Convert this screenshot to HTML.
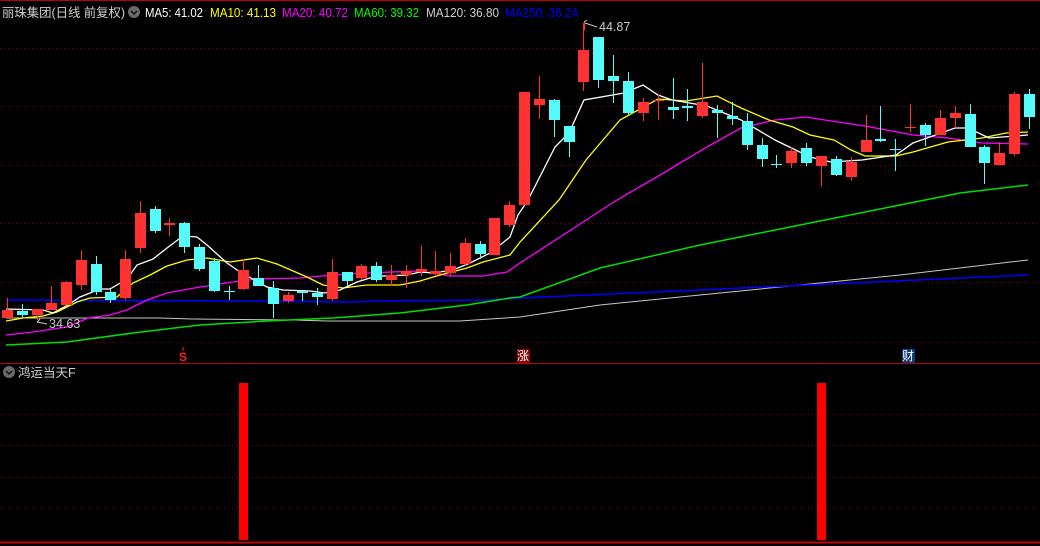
<!DOCTYPE html>
<html><head><meta charset="utf-8"><style>
html,body{margin:0;padding:0;background:#000;}
body{width:1040px;height:546px;overflow:hidden;position:relative;font-family:"Liberation Sans","Noto Sans CJK SC",sans-serif;}
svg{position:absolute;left:0;top:0;}
.t{font-size:12.5px;}
</style></head><body>
<svg width="1040" height="546" viewBox="0 0 1040 546" shape-rendering="crispEdges">
<g stroke="#8a0000" stroke-width="1" stroke-dasharray="1 3">
<line x1="0" y1="48.5" x2="1040" y2="48.5"/>
<line x1="0" y1="106.5" x2="1040" y2="106.5"/>
<line x1="0" y1="165.5" x2="1040" y2="165.5"/>
<line x1="0" y1="223.5" x2="1040" y2="223.5"/>
<line x1="0" y1="282.5" x2="1040" y2="282.5"/>
<line x1="0" y1="342.5" x2="1040" y2="342.5"/>
<line x1="0" y1="414.5" x2="1040" y2="414.5"/>
<line x1="0" y1="445.5" x2="1040" y2="445.5"/>
<line x1="0" y1="477.5" x2="1040" y2="477.5"/>
<line x1="0" y1="508.5" x2="1040" y2="508.5"/>
</g>
<line x1="0" y1="0.5" x2="1040" y2="0.5" stroke="#c00000"/>
<line x1="0" y1="363.5" x2="1040" y2="363.5" stroke="#c00000"/>
<line x1="0" y1="542.5" x2="1040" y2="542.5" stroke="#c00000" stroke-width="2"/>

<g fill="none" stroke-width="1" shape-rendering="auto">
<polyline stroke="#c8c8c8" points="6,318 160,318 193,319 293,320 327,321 460,321 520,317 600,305 700,295 800,285 900,275 1028,260"/>
<polyline stroke="#0000ff" stroke-width="1.5" points="6,300 250,301 353,302 383,301 490,300 520,298 700,290 850,283 1028,275"/>
<polyline stroke="#00e000" stroke-width="1.5" points="6,345 67,342 133,333 200,325 267,321 333,318 400,313 467,305 510,298 520,297 600,268 700,245 800,225 900,205 960,193 1028,185"/>
<polyline stroke="#ff00ff" stroke-width="1.3" points="6,335 33,332 67,327 88,318 110,315 127,310 147,300 167,293 200,287 233,282 257,279 300,278 333,275 367,273 417,271 433,273 450,276 483,276 507,272 520,263 617,200 655,178 707,147 741,128 775,120 806,117 844,123 865,126 913,135 948,138 982,143 1028,144"/>
<polyline stroke="#ffff00" stroke-width="1.3" points="6,321 23,318 43,316 57,312 77,302 90,298 117,297 133,283 150,275 167,266 187,260 207,258 230,262 257,258 277,264 307,277 323,285 343,288 367,285 400,285 420,281 440,275 467,268 483,262 510,255 520,242 559,200 586,160 620,120 658,99 686,101 717,96 741,108 769,120 793,127 810,135 834,140 851,150 865,156 896,156 913,152 948,142 982,138 1006,133 1028,132"/>
<polyline stroke="#ffffff" stroke-width="1.3" points="6,309 43,310 53,313 68,305 80,297 100,289 110,289 127,279 137,265 153,259 167,248 183,236 197,237 207,245 227,263 240,272 267,287 283,290 310,291 325,293 340,290 357,282 370,278 383,276 407,275 420,272 433,273 453,270 470,263 490,253 510,237 518,215 528,200 555,147 569,133 584,100 624,93 643,85 658,95 672,100 707,106 741,120 775,140 810,157 831,162 862,160 896,155 913,143 955,128 968,128 989,138 1028,135"/>
</g>

<g id="c"></g>

<g shape-rendering="auto">
<line x1="584.5" y1="22" x2="584.5" y2="30" stroke="#ff3232"/>
<path d="M585 23 L597 27" stroke="#c8c8c8" fill="none"/>
<path d="M584 22 L587 20" stroke="#c8c8c8" fill="none"/>
<text x="599" y="31" fill="#c8c8c8" class="t">44.87</text>
<path d="M37 322 L47 324 M37 322 L40 319" stroke="#c8c8c8" fill="none"/>
<text x="49" y="328" fill="#c8c8c8" class="t">34.63</text>
</g>

<rect x="239" y="383" width="9" height="157" fill="#ff0000"/>
<rect x="817" y="383" width="9" height="157" fill="#ff0000"/>

<text x="179" y="361" fill="#ff2020" font-size="12" font-weight="bold">S</text>
<line x1="183" y1="347" x2="183" y2="351" stroke="#ff2020"/>
<rect x="517" y="349" width="13" height="14" fill="#8a0000"/>
<text x="517" y="360" fill="#fff" font-size="12">涨</text>
<rect x="902" y="349" width="13" height="14" fill="#0a3c78"/>
<text x="902" y="360" fill="#fff" font-size="12">财</text>

<g shape-rendering="auto">
<circle cx="134" cy="12" r="6" fill="#6a6a6a"/>
<path d="M131 11 L134 14 L137 11" stroke="#111" stroke-width="1.5" fill="none"/>
<circle cx="9" cy="372" r="6" fill="#6a6a6a"/>
<path d="M6 371 L9 374 L12 371" stroke="#111" stroke-width="1.5" fill="none"/>
</g>
<g class="t" lengthAdjust="spacingAndGlyphs">
<text x="2" y="17" fill="#d0d0d0" textLength="123" lengthAdjust="spacingAndGlyphs">丽珠集团(日线 前复权)</text>
<text x="145" y="17" fill="#ffffff" textLength="58" lengthAdjust="spacingAndGlyphs">MA5: 41.02</text>
<text x="210" y="17" fill="#ffff00" textLength="66" lengthAdjust="spacingAndGlyphs">MA10: 41.13</text>
<text x="282" y="17" fill="#ff00ff" textLength="66" lengthAdjust="spacingAndGlyphs">MA20: 40.72</text>
<text x="354" y="17" fill="#00ff00" textLength="65" lengthAdjust="spacingAndGlyphs">MA60: 39.32</text>
<text x="426" y="17" fill="#d0d0d0" textLength="73" lengthAdjust="spacingAndGlyphs">MA120: 36.80</text>
<text x="505" y="17" fill="#0000ff" textLength="73" lengthAdjust="spacingAndGlyphs">MA250: 36.24</text>
<text x="18" y="377" fill="#d0d0d0">鸿运当天F</text>
</g>
</svg>
<script>
var d=[
['r',310,318,298,318],['c',311,315,304,318],['r',309,315,309,320],['r',303,310,286,310],['r',282,305,281,305],
['r',260,285,250,290],['c',264,292,256,295],['c',292,300,289,303],['r',259,298,250,300],['r',213,248,201,253],
['c',209,231,206,233],['r',223,225,218,236],['c',223,247,222,253],['c',247,269,244,271],['c',261,291,258,292],
['c',291,292,286,300],['r',270,289,259,290],['c',278,286,265,286],['c',288,304,281,318],['r',295,301,292,303],
['c',291,293,291,301],['c',293,297,288,305],['r',272,299,259,301],['c',272,281,272,286],['r',266,278,264,280],
['c',266,280,262,282],['r',275,280,265,286],['r',271,275,265,288],['r',269,272,246,276],['r',271,274,251,276],
['r',266,273,253,276],['r',243,264,238,266],['c',244,254,241,259],['r',218,255,218,255],['r',205,225,201,227],
['r',92,205,92,205],['r',99,105,76,119],['c',100,120,99,137],['c',126,142,126,157],['r',50,82,23,91],
['c',37,80,37,88],['c',76,81,55,103],['c',81,113,72,115],['r',102,113,98,121],['r',100,101,94,120],
['c',107,110,78,119],['c',106,108,89,121],['r',102,116,63,118],['c',110,113,105,138],['c',116,119,102,125],
['c',121,145,113,150],['c',145,159,138,167],['c',164,165,155,168],['r',151,163,147,168],['c',148,163,143,166],
['r',156,166,156,186],['c',159,175,156,176],['r',162,177,157,181],['r',140,152,115,152],['c',139,141,106,142],
['c',149,150,139,171],['r',127,128,104,132],['c',125,135,123,146],['r',118,135,110,135],['r',113,118,106,128],
['c',114,147,104,147],['c',147,163,145,184],['r',153,165,142,165],['r',94,154,92,156],['c',94,117,89,129]];
var s='';
for(var i=0;i<d.length;i++){
 var x=i<35?Math.round(7+i*14.77):Math.round(524+(i-35)*14.85);
 var e=d[i],col=e[0]=='r'?'#ff3232':'#54fcfc';
 var h=Math.max(1,e[2]-e[1]);
 s+='<line x1="'+(x+0.5)+'" y1="'+e[3]+'" x2="'+(x+0.5)+'" y2="'+e[4]+'" stroke="'+col+'"/>';
 s+='<rect x="'+(x-5)+'" y="'+e[1]+'" width="11" height="'+h+'" fill="'+col+'"/>';
}
document.getElementById('c').innerHTML=s;
</script>
</body></html>
